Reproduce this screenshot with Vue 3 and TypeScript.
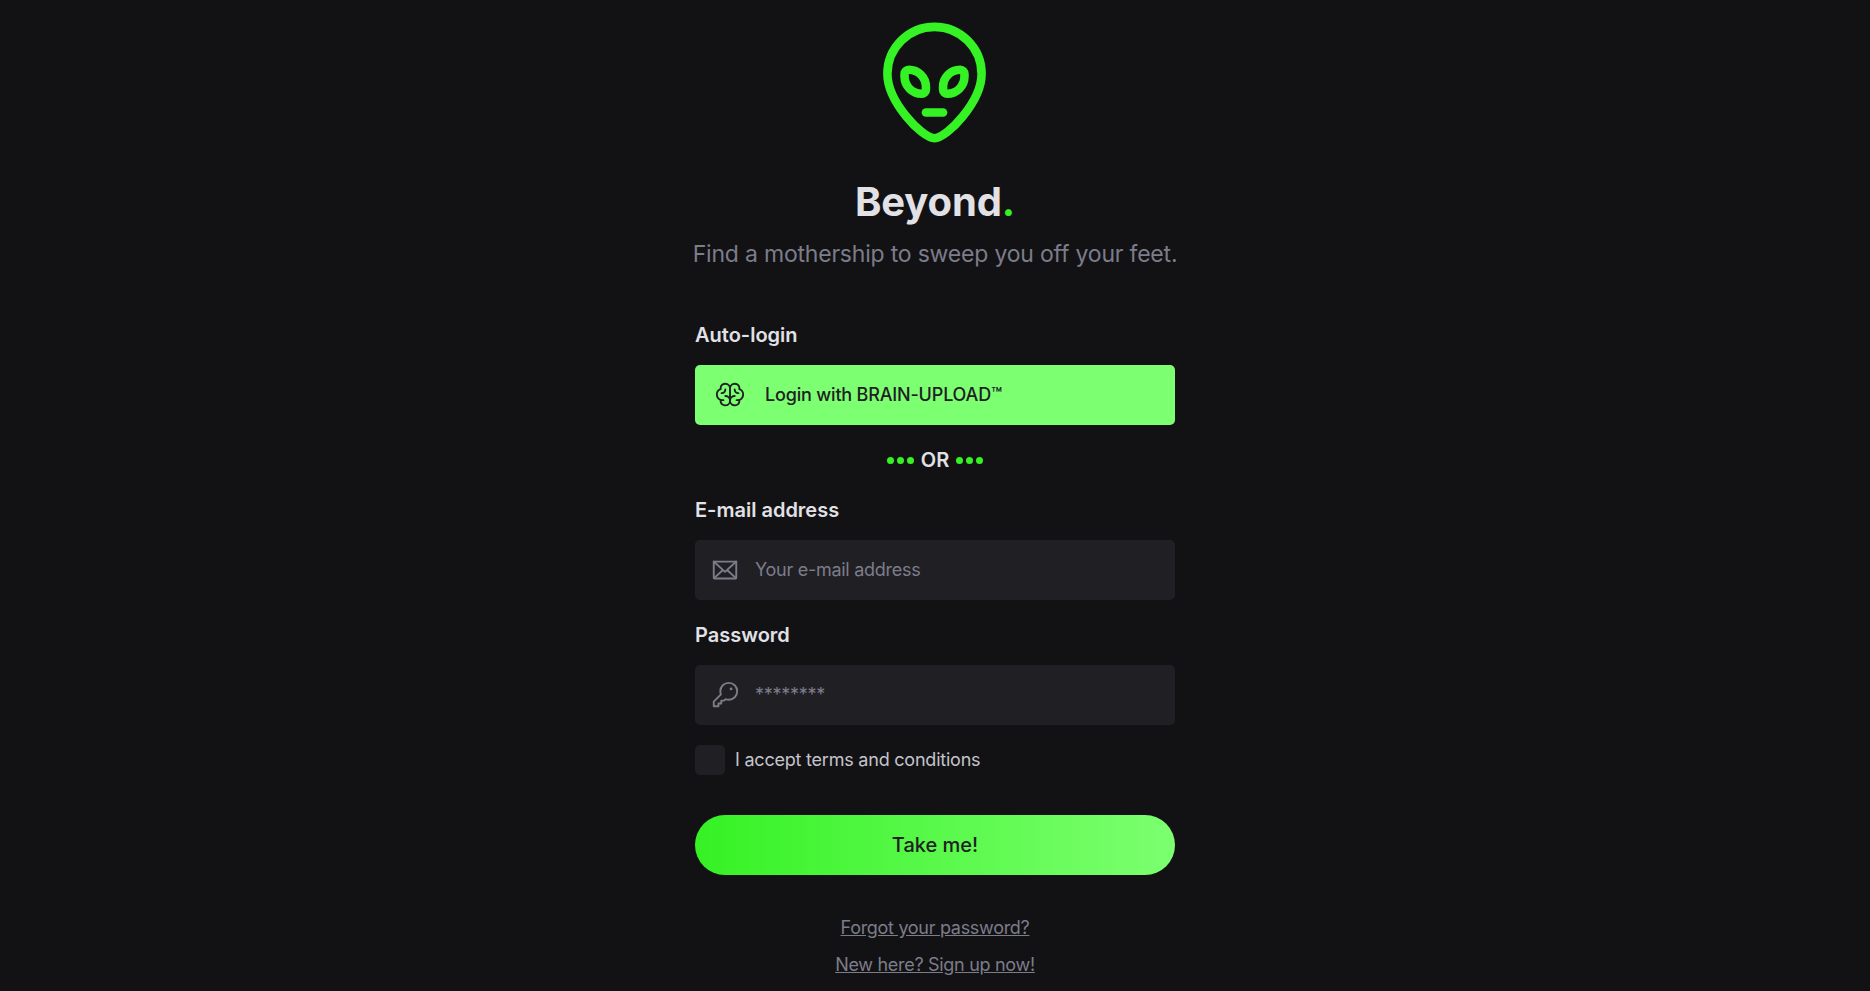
<script setup lang="ts">
import { ref } from 'vue'

const email = ref('')
const password = ref('')
const accepted = ref(false)
const links: string[] = ['Forgot your password?', 'New here? Sign up now!']
</script>

<template>
  <main class="page">
    <header class="header">
      <svg class="logo" viewBox="0 0 256 256" fill="none" stroke="currentColor" stroke-width="16" stroke-linecap="round" stroke-linejoin="round">
        <path d="M216,112c0,50.8-64,120-88,120S40,162.8,40,112a88,88,0,0,1,176,0Z" />
        <path d="M80,104a32,32,0,0,1,32,32v5a8,8,0,0,1-8,8a32,32,0,0,1-32-32v-5a8,8,0,0,1,8-8Z" />
        <path d="M176,104a32,32,0,0,0-32,32v5a8,8,0,0,0,8,8a32,32,0,0,0,32-32v-5a8,8,0,0,0-8-8Z" />
        <path d="M112,184H144" />
      </svg>
      <h1 class="title">Beyond<span>.</span></h1>
      <p class="tagline">Find a mothership to sweep you off your feet.</p>
    </header>

    <form class="form" @submit.prevent>
      <h2 class="label">Auto-login</h2>
      <button class="brain" type="button">
        <svg class="icon" viewBox="0 0 256 256" fill="currentColor">
          <path d="M248,124a56.11,56.11,0,0,0-32-50.61V72a48,48,0,0,0-88-26.49A48,48,0,0,0,40,72v1.39a56,56,0,0,0,0,101.2V176a48,48,0,0,0,88,26.49A48,48,0,0,0,216,176v-1.41A56.09,56.09,0,0,0,248,124ZM88,208a32,32,0,0,1-31.81-28.56A55.87,55.87,0,0,0,64,180h8a8,8,0,0,0,0-16H64A40,40,0,0,1,50.67,86.27,8,8,0,0,0,56,78.73V72a32,32,0,0,1,64,0v68.26A47.8,47.8,0,0,0,88,128a8,8,0,0,0,0,16,32,32,0,0,1,0,64Zm104-44h-8a8,8,0,0,0,0,16h8a55.87,55.87,0,0,0,7.81-.56A32,32,0,1,1,168,144a8,8,0,0,0,0-16,47.8,47.8,0,0,0-32,12.26V72a32,32,0,0,1,64,0v6.73a8,8,0,0,0,5.33,7.54A40,40,0,0,1,192,164Zm16-52a8,8,0,0,1-8,8h-4a36,36,0,0,1-36-36V80a8,8,0,0,1,16,0v4a20,20,0,0,0,20,20h4A8,8,0,0,1,208,112ZM60,120H56a8,8,0,0,1,0-16h4A20,20,0,0,0,80,84V80a8,8,0,0,1,16,0v4A36,36,0,0,1,60,120Z" />
        </svg>
        <span>Login with BRAIN-UPLOAD™</span>
      </button>

      <div class="divider">
        <span class="dots"><i v-for="n in 3" :key="n" /></span>
        <span class="or">OR</span>
        <span class="dots"><i v-for="n in 3" :key="n" /></span>
      </div>

      <label class="label" for="email">E-mail address</label>
      <div class="field">
        <svg class="icon" viewBox="0 0 256 256" fill="none" stroke="currentColor" stroke-width="16" stroke-linecap="round" stroke-linejoin="round">
          <path d="M32,56H224V192a8,8,0,0,1-8,8H40a8,8,0,0,1-8-8Z" />
          <path d="M224,56,128,144,32,56M110.5,128,34.5,197.7M221.5,197.7,145.5,128" />
        </svg>
        <input id="email" v-model="email" type="email" placeholder="Your e-mail address" />
      </div>

      <label class="label second" for="password">Password</label>
      <div class="field">
        <svg class="icon" viewBox="0 0 256 256" fill="none" stroke="currentColor" stroke-width="16" stroke-linecap="round" stroke-linejoin="round">
          <path d="M93.2,122.8A70.3,70.3,0,0,1,88,96a72,72,0,1,1,72,72,70.3,70.3,0,0,1-26.8-5.2L120,176H96v24H72v24H32V184Z" />
          <circle cx="180" cy="76" r="12" fill="currentColor" stroke="none" />
        </svg>
        <input id="password" v-model="password" type="password" placeholder="********" />
      </div>

      <label class="terms">
        <input v-model="accepted" type="checkbox" />
        <span>I accept terms and conditions</span>
      </label>

      <button class="submit" type="submit">Take me!</button>
    </form>

    <nav class="links">
      <a v-for="link in links" :key="link" href="#">{{ link }}</a>
    </nav>
  </main>
</template>

<style>
html,
body {
  margin: 0;
  background: #121214;
}
</style>

<style scoped>
.page {
  box-sizing: border-box;
  height: 991px;
  padding-top: 14px;
  overflow: hidden;
  display: flex;
  flex-direction: column;
  align-items: center;
  background: #121214;
  color: #e1e1e6;
  font-family: Inter, sans-serif;
}
.header {
  display: flex;
  flex-direction: column;
  align-items: center;
}
.logo {
  display: block;
  width: 137px;
  height: 137px;
  margin-right: 1px;
  color: #35f224;
}
.title {
  margin: 27px 0 0;
  font-size: 40px;
  line-height: 48px;
  font-weight: 700;
  letter-spacing: -0.15px;
}
.title span {
  color: #35f224;
}
.tagline {
  margin: 13px 0 0;
  font-size: 23px;
  line-height: 30px;
  font-weight: 400;
  letter-spacing: -0.2px;
  color: #7c7c8a;
}
.form {
  width: 480px;
  margin-top: 54px;
  display: flex;
  flex-direction: column;
}
.label {
  margin: 0 0 18px;
  font-size: 20px;
  line-height: 24px;
  font-weight: 600;
}
.label.second {
  margin-top: 23px;
}
button,
input {
  font-family: inherit;
  border: 0;
  outline: 0;
}
.icon {
  width: 30px;
  height: 30px;
  flex: none;
}
.brain {
  display: flex;
  align-items: center;
  gap: 20px;
  height: 60px;
  padding: 0 20px;
  border-radius: 5px;
  background: #7cff70;
  color: #202024;
  font-size: 18px;
  font-weight: 500;
  letter-spacing: -0.18px;
}
.brain span,
.terms span {
  padding-bottom: 2px;
}
.divider {
  display: flex;
  align-items: center;
  justify-content: center;
  gap: 7px;
  height: 24px;
  margin: 23px 0 26px;
}
.or {
  font-size: 20px;
  line-height: 24px;
  font-weight: 600;
}
.dots {
  display: flex;
  gap: 3px;
}
.dots i {
  width: 7px;
  height: 7px;
  border-radius: 50%;
  background: #35f224;
}
.field {
  box-sizing: border-box;
  display: flex;
  align-items: center;
  gap: 15px;
  height: 60px;
  padding: 0 15px;
  border-radius: 5px;
  background: #202024;
  color: #7c7c8a;
}
.field input {
  flex: 1;
  min-width: 0;
  padding: 0;
  background: transparent;
  color: #e1e1e6;
  font-size: 18px;
  line-height: 22px;
  letter-spacing: -0.28px;
}
.field input::placeholder {
  color: #7c7c8a;
  opacity: 1;
}
.terms {
  display: flex;
  align-items: center;
  gap: 10px;
  height: 30px;
  margin-top: 20px;
  font-size: 18px;
  letter-spacing: -0.22px;
  color: #c4c4cc;
}
.terms input {
  appearance: none;
  width: 30px;
  height: 30px;
  margin: 0;
  border-radius: 5px;
  background: #202024;
}
.terms input:checked {
  background: #35f224;
}
.submit {
  height: 60px;
  margin-top: 40px;
  border-radius: 30px;
  background: linear-gradient(90deg, #35f224, #7cff70);
  color: #202024;
  font-size: 20px;
  font-weight: 500;
}
.links {
  display: flex;
  flex-direction: column;
  align-items: center;
  gap: 15px;
  margin-top: 42px;
}
.links a {
  font-size: 18px;
  line-height: 22px;
  font-weight: 400;
  letter-spacing: -0.3px;
  color: #7c7c8a;
  text-decoration: underline;
}
</style>
